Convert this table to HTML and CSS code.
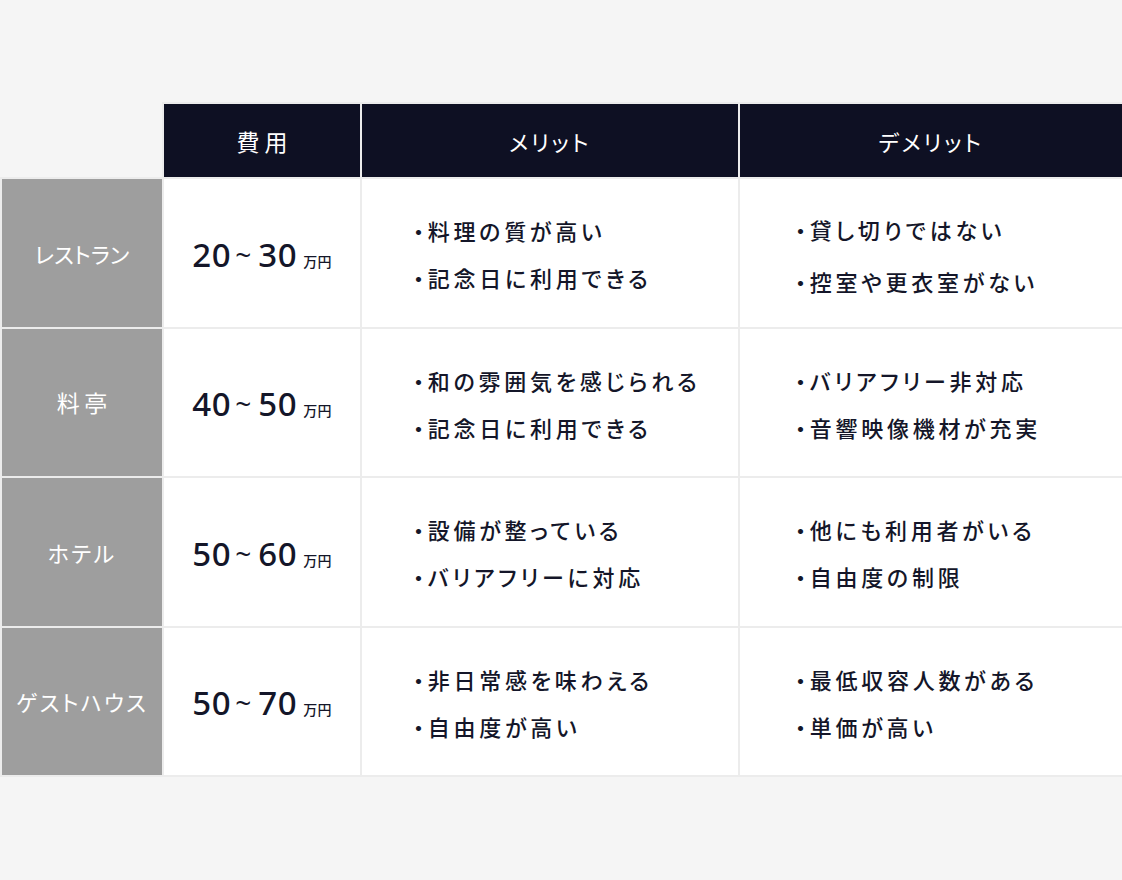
FILE: index.html
```html
<!DOCTYPE html>
<html lang="ja">
<head>
<meta charset="utf-8">
<title>会場比較</title>
<link rel="stylesheet" href="styles.css">
</head>
<body>
<main class="page">
  <table class="compare">
    <colgroup>
      <col class="c-label">
      <col class="c-cost">
      <col class="c-merit">
      <col class="c-demerit">
    </colgroup>
    <thead>
      <tr>
        <th class="corner"></th>
        <th class="head head-cost">費用</th>
        <th class="head">メリット</th>
        <th class="head">デメリット</th>
      </tr>
    </thead>
    <tbody>
      <tr>
        <th class="label label-tight">レストラン</th>
        <td class="cost"><span class="num">20</span><span class="tilde">~</span><span class="num">30</span><span class="unit">万円</span></td>
        <td class="list merit"><p>・料理の質が高い</p><p>・記念日に利用できる</p></td>
        <td class="list demerit wide"><p>・貸し切りではない</p><p>・控室や更衣室がない</p></td>
      </tr>
      <tr>
        <th class="label label-wide">料亭</th>
        <td class="cost"><span class="num">40</span><span class="tilde">~</span><span class="num">50</span><span class="unit">万円</span></td>
        <td class="list merit"><p>・和の雰囲気を感じられる</p><p>・記念日に利用できる</p></td>
        <td class="list demerit"><p>・バリアフリー非対応</p><p>・音響映像機材が充実</p></td>
      </tr>
      <tr>
        <th class="label">ホテル</th>
        <td class="cost"><span class="num">50</span><span class="tilde">~</span><span class="num">60</span><span class="unit">万円</span></td>
        <td class="list merit"><p>・設備が整っている</p><p>・バリアフリーに対応</p></td>
        <td class="list demerit"><p>・他にも利用者がいる</p><p>・自由度の制限</p></td>
      </tr>
      <tr>
        <th class="label">ゲストハウス</th>
        <td class="cost"><span class="num">50</span><span class="tilde">~</span><span class="num">70</span><span class="unit">万円</span></td>
        <td class="list merit"><p>・非日常感を味わえる</p><p>・自由度が高い</p></td>
        <td class="list demerit"><p>・最低収容人数がある</p><p>・単価が高い</p></td>
      </tr>
    </tbody>
  </table>
</main>
</body>
</html>
```

FILE: styles.css
```css
html, body {
  margin: 0;
  padding: 0;
  background: #f5f5f5;
}

body {
  width: 1122px;
  height: 880px;
  font-family: "Noto Sans CJK JP", "Noto Sans", sans-serif;
  color: #141629;
}

.page {
  padding-top: 102px;
}

.compare {
  width: 1122px;
  table-layout: fixed;
  border-collapse: collapse;
}

.c-label { width: 162px; }
.c-cost { width: 198px; }
.c-merit { width: 378px; }
.c-demerit { width: 384px; }

.compare th,
.compare td {
  border: 2px solid #ececec;
  padding: 0;
}

.compare th.corner {
  border: none;
  background: transparent;
}

.compare .head {
  height: 73px;
  background: #0e1023;
  color: #ffffff;
  font-weight: 400;
  font-size: 22px;
  letter-spacing: 0.12em;
  font-feature-settings: "palt";
  text-align: center;
  vertical-align: middle;
}

.compare .head-cost {
  font-size: 23px;
  letter-spacing: 0.22em;
  text-indent: 0.22em;
}

.compare .label {
  height: 147.5px;
  background: #9e9e9e;
  color: #ffffff;
  font-weight: 400;
  font-size: 22px;
  letter-spacing: 0.1em;
  font-feature-settings: "palt";
  text-align: center;
  vertical-align: middle;
}

.compare .label-tight {
  letter-spacing: 0;
}

.compare .label-wide {
  font-size: 23px;
  letter-spacing: 0.2em;
  text-indent: 0.2em;
}

.compare .cost,
.compare .list {
  background: #ffffff;
  vertical-align: middle;
}

.compare .cost {
  text-align: center;
  white-space: nowrap;
  padding-top: 3px;
}

.num {
  font-family: "Noto Sans", sans-serif;
  font-size: 33px;
  font-weight: 500;
  letter-spacing: 0.02em;
}

.tilde {
  font-family: "Noto Sans", sans-serif;
  font-size: 28px;
  font-weight: 400;
  margin: 0 7px 0 4px;
  position: relative;
  top: -2px;
}

.unit {
  font-size: 14px;
  font-weight: 500;
  margin-left: 6px;
  letter-spacing: 0.02em;
}

.list p {
  margin: 0;
  font-size: 22px;
  font-weight: 500;
  line-height: 47px;
  letter-spacing: 0.17em;
  font-feature-settings: "palt";
  white-space: nowrap;
}

.compare .merit {
  padding-left: 51px;
  padding-top: 3px;
}

.compare .demerit {
  padding-left: 55px;
  padding-top: 3px;
}

.compare .demerit.wide {
  padding-top: 6px;
}

.compare .demerit.wide p + p {
  margin-top: 5px;
}
```
